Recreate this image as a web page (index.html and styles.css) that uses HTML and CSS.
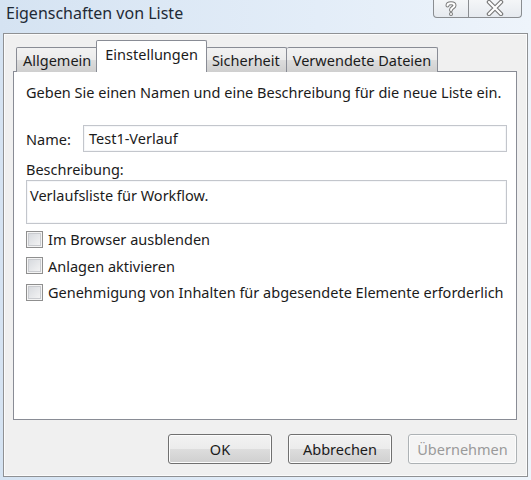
FILE: index.html
```html
<!DOCTYPE html>
<html lang="de">
<head>
  <meta charset="UTF-8" />
  <title>Eigenschaften von Liste</title>
  <link rel="stylesheet" href="styles.css">
</head>
<body>
  <div class="titlebar">
    <span class="title">Eigenschaften von Liste</span>
    <div class="caption-buttons">
      <span class="cap-btn help">
        <svg width="16" height="16" viewBox="0 0 16 16">
          <path d="M4.5 5.5 C4.5 2.5 11.5 2.5 11.5 5.5 C11.5 7.5 8 7.5 8 10" fill="none" stroke="#7b7b7b" stroke-width="4" stroke-linecap="round"/>
          <path d="M4.5 5.5 C4.5 2.5 11.5 2.5 11.5 5.5 C11.5 7.5 8 7.5 8 10" fill="none" stroke="#fff" stroke-width="2" stroke-linecap="round"/>
          <circle cx="8" cy="14" r="2" fill="#7b7b7b"/>
          <circle cx="8" cy="14" r="1" fill="#fff"/>
        </svg>
      </span>
      <span class="cap-btn close">
        <svg width="20" height="16" viewBox="0 0 20 16">
          <path d="M4 2 L16 14 M16 2 L4 14" stroke="#7b7b7b" stroke-width="4.5" stroke-linecap="round"/>
          <path d="M4 2 L16 14 M16 2 L4 14" stroke="#fff" stroke-width="2.2" stroke-linecap="round"/>
        </svg>
      </span>
    </div>
  </div>

  <div class="window">
    <div class="tabs">
      <div class="tab">Allgemein</div>
      <div class="tab active">Einstellungen</div>
      <div class="tab">Sicherheit</div>
      <div class="tab">Verwendete Dateien</div>
    </div>

    <div class="panel">
      <p class="intro">Geben Sie einen Namen und eine Beschreibung für die neue Liste ein.</p>

      <div class="name-row">
        <label class="name-label">Name:</label>
        <div class="textbox name-box">Test1-Verlauf</div>
      </div>

      <div class="desc-label">Beschreibung:</div>
      <div class="textbox desc-box">Verlaufsliste für Workflow.</div>

      <div class="checks">
        <div class="check-row"><span class="check"></span>Im Browser ausblenden</div>
        <div class="check-row"><span class="check"></span>Anlagen aktivieren</div>
        <div class="check-row"><span class="check"></span>Genehmigung von Inhalten für abgesendete Elemente erforderlich</div>
      </div>
    </div>

    <div class="buttons">
      <button class="btn">OK</button>
      <button class="btn">Abbrechen</button>
      <button class="btn disabled">Übernehmen</button>
    </div>
  </div>
</body>
</html>
```

FILE: styles.css
```css
body {
  margin: 0;
  width: 531px;
  height: 480px;
  overflow: hidden;
  background: linear-gradient(to right, #d5e3f2, #e3edf8 60%, #eef4fb);
  font-family: "Noto Sans", "Open Sans", sans-serif;
  font-size: 14.5px;
  color: #1b1b1b;
}
.titlebar {
  height: 33px;
  display: flex;
  justify-content: space-between;
  align-items: flex-start;
}
.title {
  margin: 2px 0 0 6px;
  font-size: 16px;
  color: #1f2a36;
}
.caption-buttons {
  display: flex;
  margin-right: 9px;
}
.cap-btn {
  height: 17px;
  border: 1px solid #8a8d91;
  border-top: none;
  background: linear-gradient(#f4f6f8, #e6eaef);
  display: flex;
  align-items: flex-start;
  justify-content: center;
}
.help {
  width: 34px;
  border-radius: 0 0 0 4px;
}
.close {
  width: 52px;
  border-left: none;
  border-radius: 0 0 4px 0;
}
.window {
  margin-left: 3px;
  width: 504px;
  height: 442px;
  padding: 0 10px 0 9px;
  border: 1px solid #8f9194;
  background: #f0f0f0;
  box-shadow: inset 0 0 0 1px #fbfbfb;
}
.tabs {
  display: flex;
  align-items: flex-end;
  height: 38px;
  padding-left: 3px;
  position: relative;
  z-index: 1;
  margin-bottom: -1px;
}
.tab {
  height: 24px;
  padding: 0 6px;
  border: 1px solid #898c95;
  border-bottom: none;
  border-left: none;
  background: linear-gradient(#f2f2f2, #ebebeb 50%, #dddddd 50%, #cfcfcf);
  line-height: 25px;
  border-radius: 2px 2px 0 0;
}
.tab:first-child { border-left: 1px solid #898c95; }
.tab.active {
  height: 31px;
  background: #fff;
  border-left: 1px solid #898c95;
  margin: 0 -1px 0 -2px;
  padding: 0 8px;
  line-height: 26px;
  position: relative;
}
.panel {
  height: 347px;
  border: 1px solid #898c95;
  background: #fff;
  padding: 0 9px 0 12px;
}
.intro {
  margin: 9px 0 0;
  line-height: 22px;
}
.name-row {
  display: flex;
  align-items: center;
  margin-top: 22px;
}
.name-label { width: 57px; }
.textbox {
  border: 1px solid #c3c6cc;
  box-shadow: inset 0 0 0 1px #f6f7f9;
  padding: 0 5px;
  line-height: 25px;
}
.name-box {
  flex: 1;
  height: 25px;
}
.desc-label {
  margin-top: 6px;
  line-height: 22px;
}
.desc-box {
  height: 40px;
  padding-top: 2px;
  padding-left: 3px;
}
.checks { margin-top: 2px; }
.check-row {
  display: flex;
  align-items: center;
  height: 26.5px;
}
.check {
  width: 15px;
  height: 15px;
  border: 1px solid #8f8f8f;
  background: linear-gradient(135deg, #d3d6db, #f7f7f7);
  box-shadow: inset 0 0 0 1px #f4f4f4, inset 0 0 0 2px #c9cbcf;
  margin-right: 5px;
}
.buttons {
  display: flex;
  justify-content: flex-end;
  gap: 16px;
  margin-top: 14px;
}
.btn {
  width: 104px;
  height: 30px;
  border: 1px solid #707070;
  border-radius: 3px;
  background: linear-gradient(#f2f2f2, #ebebeb 50%, #dddddd 50%, #cfcfcf);
  box-shadow: inset 0 0 0 1px #fcfcfc;
  font-family: "Noto Sans", "Open Sans", sans-serif;
  font-size: 14.5px;
  color: #1b1b1b;
  padding: 0;
}
.btn.disabled {
  width: 109px;
  border-color: #adb2b5;
  background: #f4f4f4;
  color: #9a9a9a;
}
```
